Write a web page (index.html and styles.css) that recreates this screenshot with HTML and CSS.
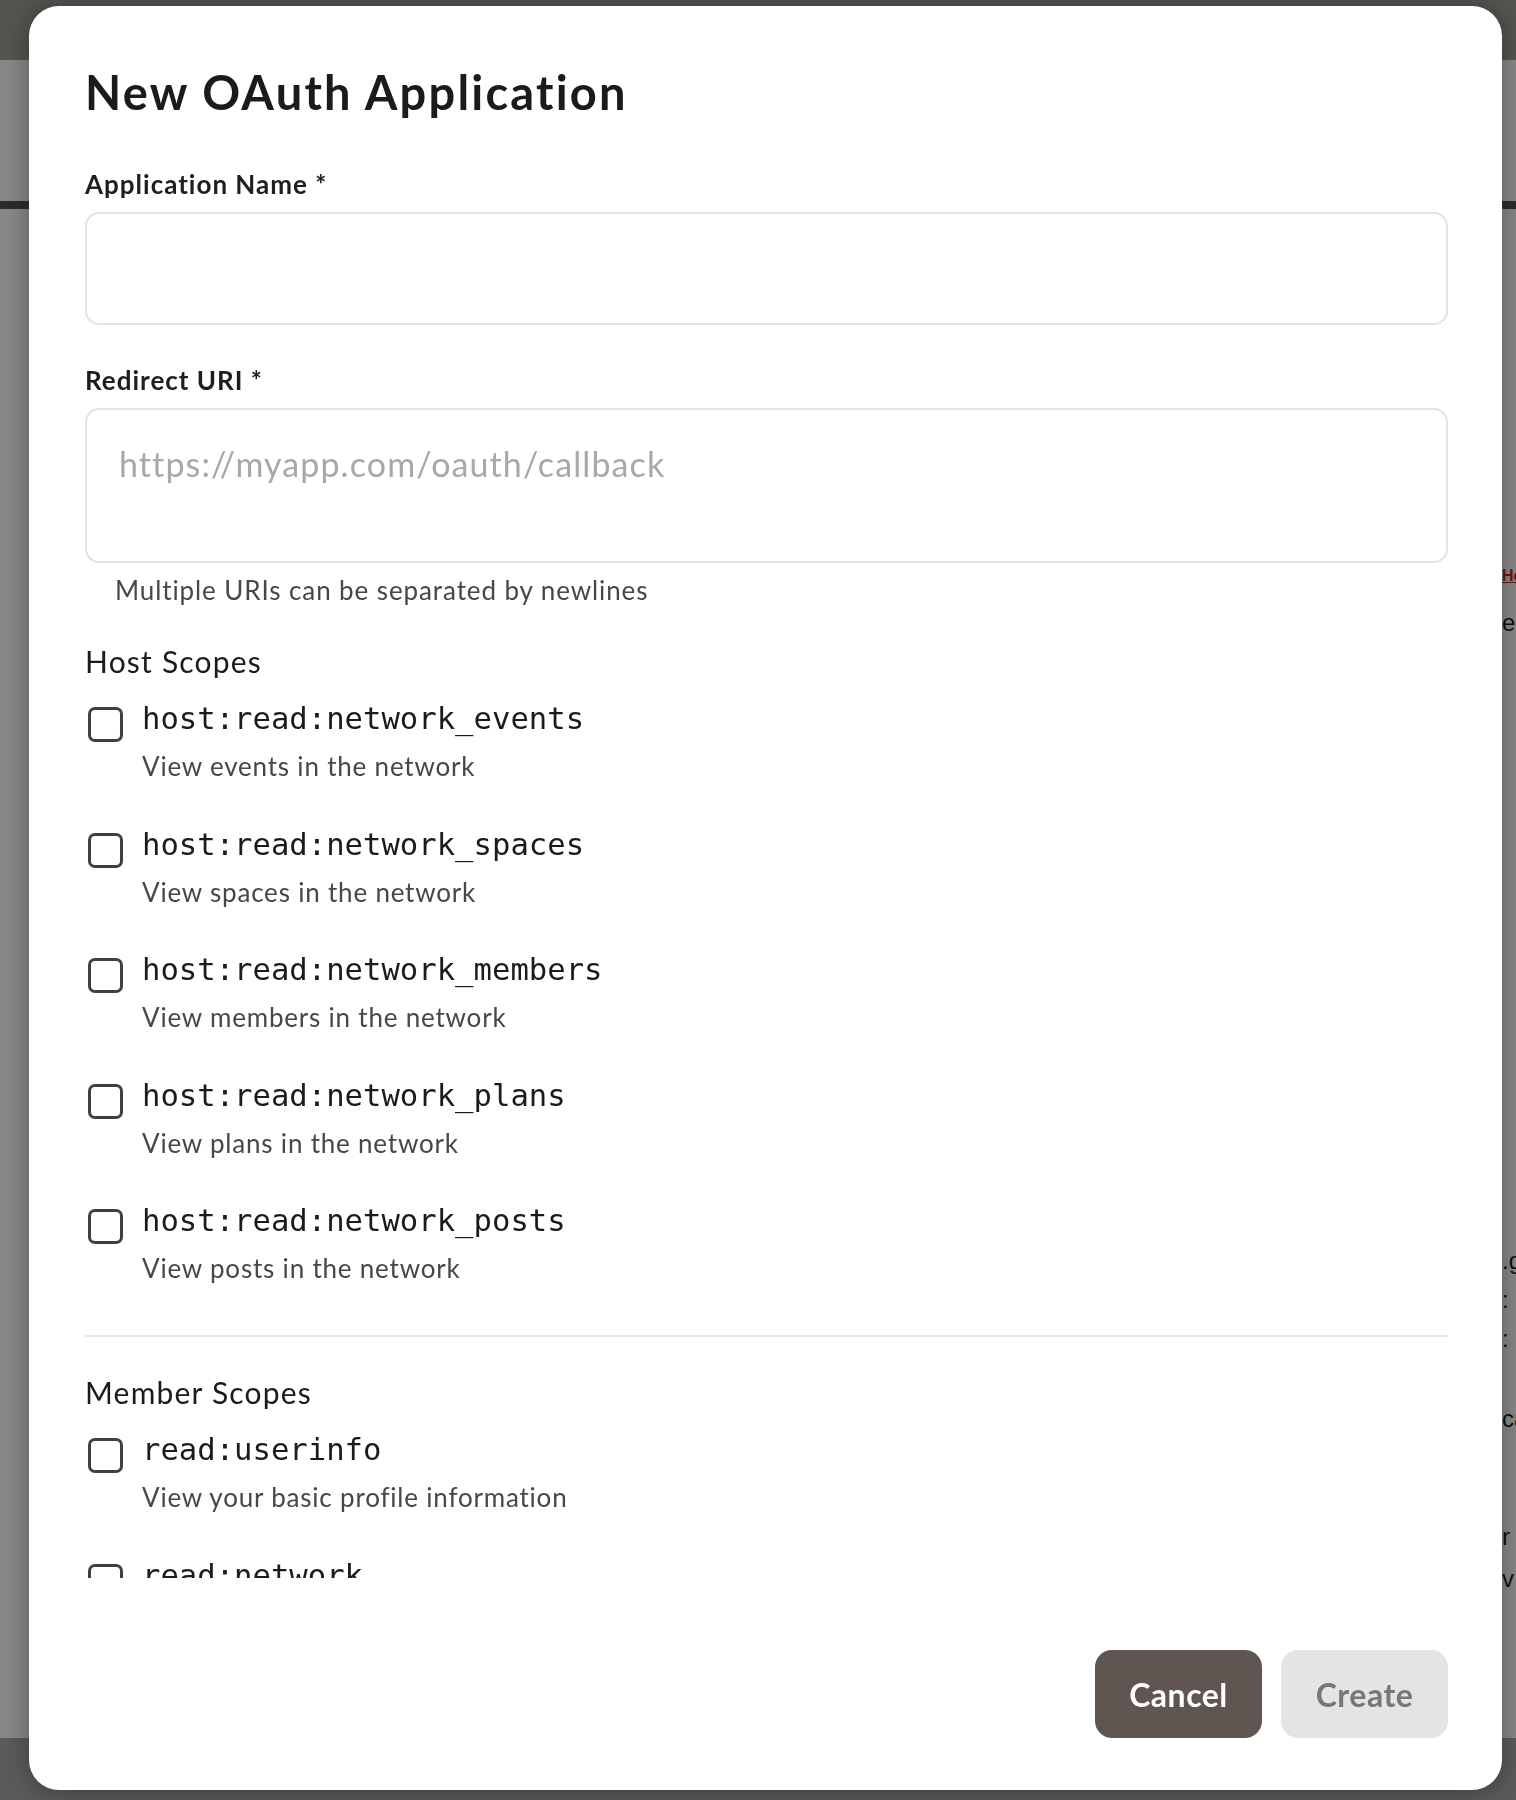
FILE: index.html
```html
<!DOCTYPE html>
<html lang="en">
<head>
    <meta charset="UTF-8">
    <meta name="viewport" content="width=device-width, initial-scale=1.0">
    <title>New OAuth Application</title>
    <link rel="stylesheet" href="styles.css">
</head>
<body>
    <div class="page">
        <header class="page-header"></header>
        <nav class="page-nav"></nav>
        <main class="page-main">
            <div class="page-content"></div>
            <aside class="page-side">
                <a class="side-link" href="#">Help center</a>
                <p class="side-line side-line-first">ea</p>
                <p class="side-line side-line-gap">.g.</p>
                <p class="side-line side-line-small">:</p>
                <p class="side-line side-line-small">:</p>
                <p class="side-line side-line-mid">ca</p>
                <p class="side-line side-line-gap2">r</p>
                <p class="side-line side-line-tight">v</p>
            </aside>
        </main>
        <footer class="page-footer"></footer>
    </div>

    <div class="overlay">
        <div class="modal">
            <h2 class="modal-title">New OAuth Application</h2>

            <div class="modal-body">
                <div class="field">
                    <label class="field-label" for="app-name">Application Name *</label>
                    <input class="text-input" type="text" id="app-name">
                </div>

                <div class="field">
                    <label class="field-label" for="redirect-uri">Redirect URI *</label>
                    <textarea class="text-area" id="redirect-uri" placeholder="https://myapp.com/oauth/callback"></textarea>
                    <p class="field-hint">Multiple URIs can be separated by newlines</p>
                </div>

                <h3 class="scope-heading">Host Scopes</h3>
                <div class="scope-list">
                    <label class="scope-item">
                        <input class="checkbox" type="checkbox">
                        <span class="scope-text">
                            <span class="scope-name">host:read:network_events</span>
                            <span class="scope-desc">View events in the network</span>
                        </span>
                    </label>
                    <label class="scope-item">
                        <input class="checkbox" type="checkbox">
                        <span class="scope-text">
                            <span class="scope-name">host:read:network_spaces</span>
                            <span class="scope-desc">View spaces in the network</span>
                        </span>
                    </label>
                    <label class="scope-item">
                        <input class="checkbox" type="checkbox">
                        <span class="scope-text">
                            <span class="scope-name">host:read:network_members</span>
                            <span class="scope-desc">View members in the network</span>
                        </span>
                    </label>
                    <label class="scope-item">
                        <input class="checkbox" type="checkbox">
                        <span class="scope-text">
                            <span class="scope-name">host:read:network_plans</span>
                            <span class="scope-desc">View plans in the network</span>
                        </span>
                    </label>
                    <label class="scope-item">
                        <input class="checkbox" type="checkbox">
                        <span class="scope-text">
                            <span class="scope-name">host:read:network_posts</span>
                            <span class="scope-desc">View posts in the network</span>
                        </span>
                    </label>
                </div>

                <hr class="divider">

                <h3 class="scope-heading">Member Scopes</h3>
                <div class="scope-list">
                    <label class="scope-item">
                        <input class="checkbox" type="checkbox">
                        <span class="scope-text">
                            <span class="scope-name">read:userinfo</span>
                            <span class="scope-desc">View your basic profile information</span>
                        </span>
                    </label>
                    <label class="scope-item">
                        <input class="checkbox" type="checkbox">
                        <span class="scope-text">
                            <span class="scope-name">read:network</span>
                            <span class="scope-desc">View basic network information</span>
                        </span>
                    </label>
                </div>
            </div>

            <div class="modal-footer">
                <button type="button" class="btn btn-cancel">Cancel</button>
                <button type="button" class="btn btn-create" disabled>Create</button>
            </div>
        </div>
    </div>
</body>
</html>
```

FILE: styles.css
```css
* {
    box-sizing: border-box;
}
body {
    margin: 0;
    font-family: Lato, "Noto Sans", sans-serif;
    background: #ffffff;
}

/* page behind the dialog */
.page {
    height: 1800px;
    display: flex;
    flex-direction: column;
}
.page-header {
    height: 60px;
    background: #a09d95;
}
.page-nav {
    height: 149px;
    background: #ffffff;
    border-bottom: 8px solid #59504a;
}
.page-main {
    flex: 1;
    display: flex;
}
.page-content {
    flex: 1;
}
.page-side {
    width: 14px;
    overflow: hidden;
    white-space: nowrap;
    font-family: "Liberation Sans", Arial, sans-serif;
    font-size: 24px;
    color: #1e1e1e;
    padding-top: 352px;
}
.side-link {
    display: block;
    color: #c62828;
    font-size: 16px;
    font-weight: bold;
    line-height: 30px;
}
.side-line {
    margin: 0;
    line-height: 30px;
}
.side-line-first {
    margin-top: 17px;
}
.side-line-gap {
    margin-top: 608px;
}
.side-line-small {
    margin-top: 9px;
}
.side-line-mid {
    margin-top: 50px;
}
.side-line-gap2 {
    margin-top: 88px;
}
.side-line-tight {
    margin-top: 12px;
}
.page-footer {
    height: 62px;
    background: #acaaa6;
}

/* dialog */
.overlay {
    position: fixed;
    inset: 0;
    background: rgba(0, 0, 0, 0.47);
    padding: 6px 14px 10px 29px;
    display: flex;
}
.modal {
    flex: 1;
    background: #ffffff;
    border-radius: 30px;
    box-shadow: 0 2px 26px rgba(0, 0, 0, 0.35);
    display: flex;
    flex-direction: column;
    padding: 58px 54px 52px 56px;
}
.modal-title {
    margin: 0;
    font-size: 47px;
    line-height: 56px;
    font-weight: 700;
    letter-spacing: 2.2px;
    color: #1b1b1b;
}
.modal-body {
    flex: 1;
    min-height: 0;
    overflow: hidden;
    padding-top: 48px;
}
.field + .field {
    margin-top: 39px;
}
.field-label {
    display: block;
    font-size: 26px;
    line-height: 32px;
    font-weight: 700;
    letter-spacing: 1px;
    color: #1e1e1e;
    margin-bottom: 12px;
}
.text-input,
.text-area {
    display: block;
    width: 100%;
    border: 2px solid #e3e3e3;
    border-radius: 14px;
    background: #ffffff;
    font-family: Lato, "Noto Sans", sans-serif;
    font-size: 34px;
    letter-spacing: 1.1px;
    color: #1b1b1b;
    outline: none;
}
.text-input {
    height: 113px;
    padding: 0 32px;
}
.text-area {
    height: 155px;
    padding: 30px 32px;
    line-height: 48px;
    resize: none;
}
.text-area::placeholder {
    color: #a8a8a8;
}
.field-hint {
    margin: 11px 0 0;
    padding-left: 30px;
    font-size: 26px;
    line-height: 32px;
    letter-spacing: 0.9px;
    color: #474747;
}
.scope-heading {
    margin: 37px 0 0;
    font-size: 30px;
    line-height: 36px;
    font-weight: 400;
    letter-spacing: 1.2px;
    color: #1b1b1b;
}
.scope-list {
    margin-top: 22px;
    display: flex;
    flex-direction: column;
    gap: 44.5px;
}
.scope-item {
    display: flex;
    gap: 19px;
    padding-left: 3px;
}
.checkbox {
    appearance: none;
    flex: none;
    width: 35px;
    height: 35px;
    margin: 6px 0 0;
    border: 3px solid #404040;
    border-radius: 7px;
    background: #ffffff;
}
.scope-text {
    display: flex;
    flex-direction: column;
}
.scope-name {
    font-family: "DejaVu Sans Mono", monospace;
    font-size: 30.6px;
    line-height: 36px;
    color: #1b1b1b;
}
.scope-desc {
    margin-top: 13px;
    font-size: 26px;
    line-height: 32px;
    letter-spacing: 0.8px;
    color: #474747;
}
.divider {
    margin: 51px 0 0;
    border: none;
    height: 2px;
    background: #e6e6e6;
}
.modal-footer {
    padding-top: 72px;
    display: flex;
    justify-content: flex-end;
    gap: 19px;
}
.btn {
    height: 88px;
    min-width: 167px;
    padding: 0 34px;
    border: none;
    border-radius: 17px;
    font-family: Lato, "Noto Sans", sans-serif;
    font-size: 32px;
    font-weight: 700;
    letter-spacing: 0.5px;
    cursor: pointer;
}
.btn-cancel {
    background: #5f5651;
    color: #ffffff;
}
.btn-create {
    background: #e4e4e4;
    color: #777777;
}
```
